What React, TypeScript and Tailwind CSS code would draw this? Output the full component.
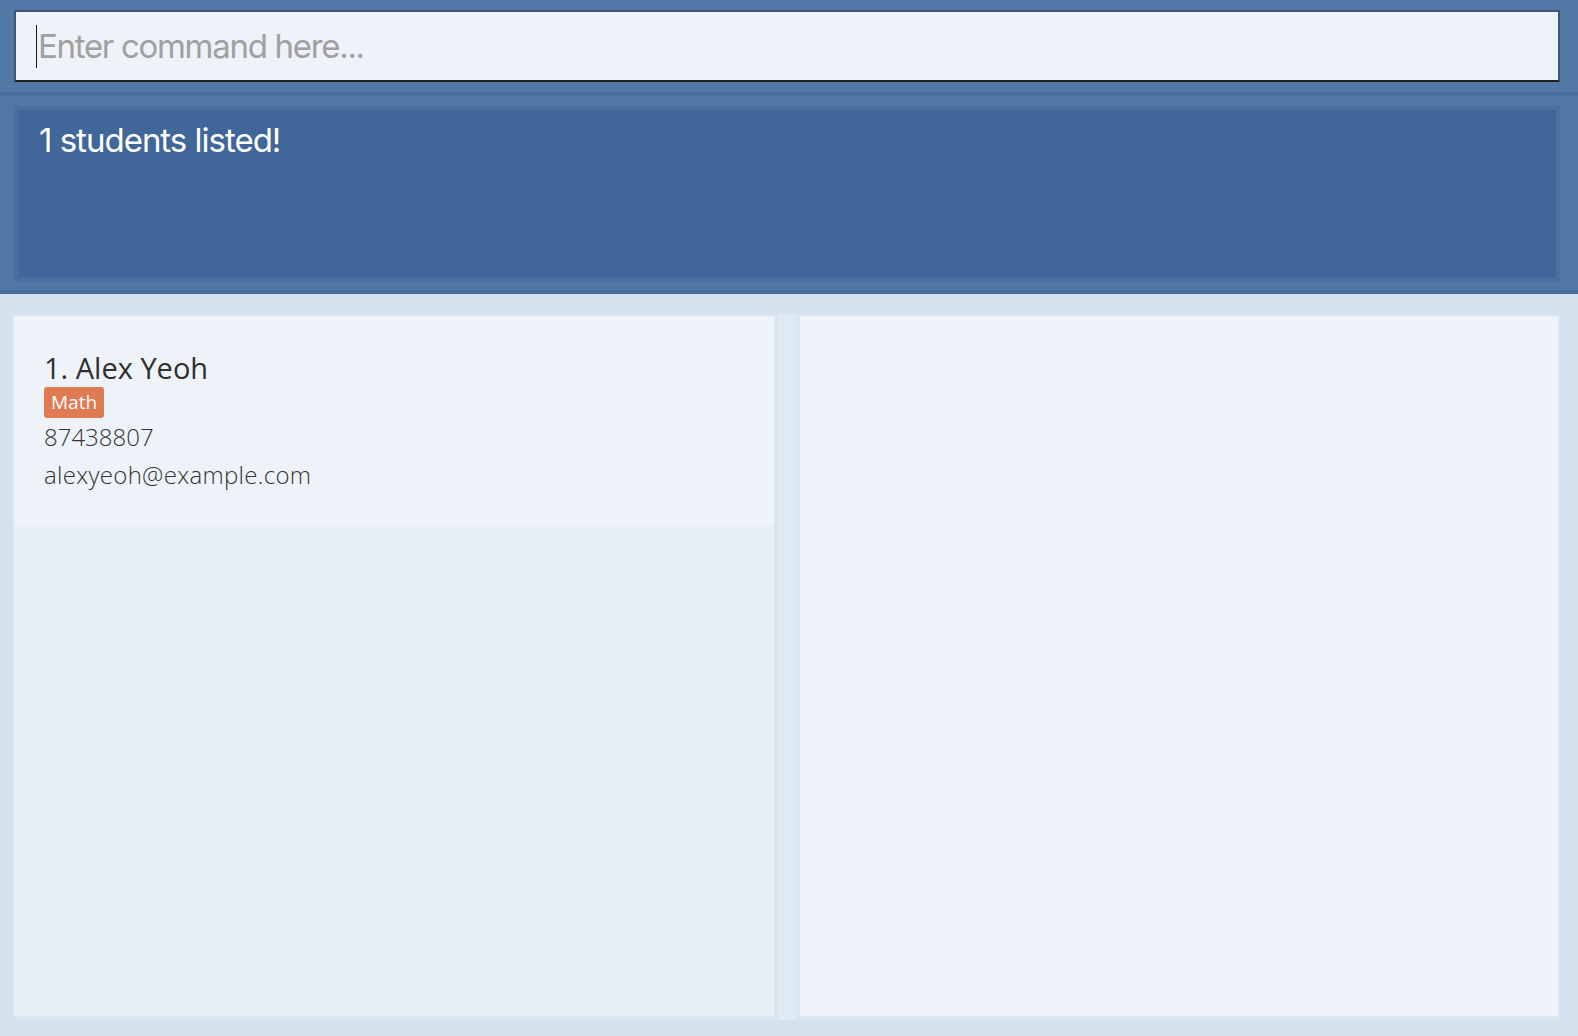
import React from 'react';

const students = [
  { id: 1, name: 'Alex Yeoh', tags: ['Math'], phone: '87438807', email: 'alexyeoh@example.com' },
];

const App: React.FC = () => {
  return (
    <div className="w-[1578px] h-[1036px] flex flex-col overflow-hidden">
      {/* Command box */}
      <div className="h-[92px] bg-[#5279a6] pt-[10px] pl-[14px] pr-[18px]">
        <div className="h-[72px] border-2 border-[#3f5677] border-b-[#1e1e1e] bg-[#eef3fa] flex items-center pl-[20px]">
          <div className="w-px h-[43px] bg-[#1a1a1a]"></div>
          <span className="ml-[1px] text-[33px] text-[#a0a0a0] font-['Inter',sans-serif] tracking-[-1.3px] leading-none">
            Enter command here...
          </span>
        </div>
      </div>
      <div className="h-[4px] bg-[#4c709e]"></div>

      {/* Result display */}
      <div className="h-[194px] bg-[#5279a6] pt-[10px] pl-[14px] pr-[18px] pb-[8px]">
        <div className="h-full border-[4px] border-[#4b6f9e] bg-[#41669a] pl-[21px] pt-[10px]">
          <p className="text-[33px] text-white font-['Inter',sans-serif] tracking-[-1px] leading-[40px]">1 students listed!</p>
        </div>
      </div>
      <div className="h-[4px] bg-[#4a6e9b]"></div>

      {/* Lists */}
      <div className="flex-1 bg-[#d4e2ed] pt-[20px] pl-[12px] pr-[18px] pb-[18px] flex">
        <div className="w-[764px] border-2 border-[#d9e5ef] bg-[#e8eff7] flex flex-col">
          {students.map((s) => (
            <div key={s.id} className="bg-[#eef3fa] pt-[34px] pb-[32px] pl-[30px] font-['Open_Sans','Noto_Sans',sans-serif] text-[#333333]">
              <p className="text-[29px] leading-[36px] text-[#2f2f2f]">{s.id}. {s.name}</p>
              <div className="flex gap-2 mt-[1px]">
                {s.tags.map((t) => (
                  <span key={t} className="h-[31px] px-[7px] rounded-[3px] bg-[#df7a52] text-white text-[19px] leading-[31px]">
                    {t}
                  </span>
                ))}
              </div>
              <p className="text-[24px] leading-[38px] font-light">{s.phone}</p>
              <p className="text-[24px] leading-[38px] font-light tracking-[0.3px]">{s.email}</p>
            </div>
          ))}
        </div>
        <div className="w-[22px] bg-[#e0eaf2] border-x-2 border-[#d9e5ee] mb-[-2px]"></div>
        <div className="flex-1 border-2 border-[#d9e5ef] bg-[#eef3fa]"></div>
      </div>
    </div>
  );
};

export default App;
